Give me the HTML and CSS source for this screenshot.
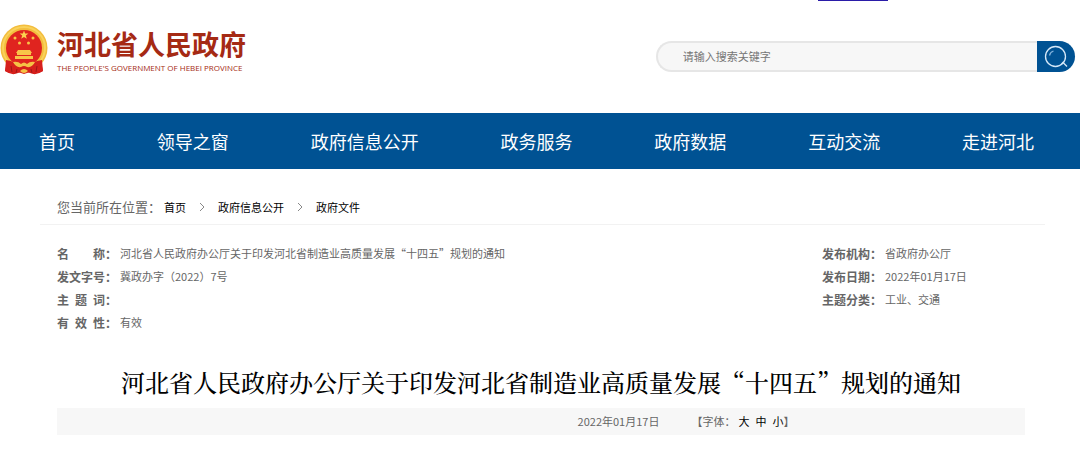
FILE: index.html
```html
<!DOCTYPE html>
<html lang="zh-CN">

<head>
    <meta charset="UTF-8">
    <meta name="viewport" content="width=device-width, initial-scale=1.0">
    <title>河北省人民政府</title>
    <link rel="stylesheet" href="styles.css">
</head>

<body>
    <header class="header">
        <span class="top-tab"></span>
        <a class="logo" href="#">
            <svg class="emblem" viewBox="0 0 48 52" aria-hidden="true">
                <path d="M8 34 L5 47 Q12 52 18 49 L24 47 L30 49 Q36 52 43 47 L40 34 Z" fill="#d6201c" />
                <circle cx="24" cy="24" r="23.5" fill="#f3bd3d" />
                <circle cx="24" cy="24" r="21" fill="none" stroke="#f9d25a" stroke-width="2" />
                <circle cx="24" cy="24" r="18" fill="#e0241f" />
                <path d="M24 6.500l1.100 3.100h3.300l-2.600 2 1 3.200-2.800-1.900-2.800 1.900 1-3.200-2.600-2h3.300z" fill="#fbd34f" />
                <g fill="#f8c548">
                    <circle cx="15" cy="14" r="1.500" />
                    <circle cx="33" cy="14" r="1.500" />
                    <circle cx="19.500" cy="19" r="1.500" />
                    <circle cx="28.500" cy="19" r="1.500" />
                    <path d="M18 26h12l2 3H16z" />
                    <path d="M17 29h14v2H17z" />
                    <path d="M15 32h18v3h-18z" />
                </g>
                <path d="M6 36 Q14 37 18 41 L24 38 L30 41 Q34 37 42 36 L43 47 Q36 51 30 48 L24 50 L18 48 Q12 51 5 47 Z" fill="#d6201c" />
                <path d="M13 38 Q18 37 21 40 Q24 37 27 40 Q30 37 35 38 Q32 44 27 43 Q24 41 21 43 Q16 44 13 38 Z" fill="#f5c245" />
                <path d="M20 47q4-4 8 0q-4 4-8 0z" fill="#f5c245" />
                <path d="M11 42l1 6M17 45l-1 4M37 42l-1 6M31 45l1 4" stroke="#9f1715" stroke-width="1" />
            </svg>
            <span class="logo-text">
                <strong>河北省人民政府</strong>
                <small>THE PEOPLE'S GOVERNMENT OF HEBEI PROVINCE</small>
            </span>
        </a>
        <form class="search">
            <input type="text" placeholder="请输入搜索关键字" aria-label="请输入搜索关键字">
            <button type="submit" aria-label="搜索">
                <svg viewBox="0 0 24 24" fill="none" stroke="#d5e8f8" stroke-width="1.300">
                    <circle cx="11.500" cy="11.500" r="10" />
                    <path d="M5.500 10.500a6 6 0 0 1 4-4.500" stroke="#7fb0da" />
                    <path d="M17.500 19l1.500-1.500 4 4" />
                </svg>
            </button>
        </form>
    </header>

    <nav class="nav">
        <a href="#">首页</a>
        <a href="#">领导之窗</a>
        <a href="#">政府信息公开</a>
        <a href="#">政务服务</a>
        <a href="#">政府数据</a>
        <a href="#">互动交流</a>
        <a href="#">走进河北</a>
    </nav>

    <main class="main">
        <div class="crumbs">
            <span class="crumbs-label">您当前所在位置：</span>
            <a href="#">首页</a>
            <svg class="arrow" viewBox="0 0 6 10"><path d="M1 1l4 4-4 4" /></svg>
            <a href="#">政府信息公开</a>
            <svg class="arrow" viewBox="0 0 6 10"><path d="M1 1l4 4-4 4" /></svg>
            <a href="#">政府文件</a>
        </div>

        <div class="info">
            <dl>
                <dt><span>名</span><span>称</span></dt>
                <dd>河北省人民政府办公厅关于印发河北省制造业高质量发展“十四五”规划的通知</dd>
                <dt><span>发</span><span>文</span><span>字</span><span>号</span></dt>
                <dd>冀政办字（2022）7号</dd>
                <dt><span>主</span><span>题</span><span>词</span></dt>
                <dd></dd>
                <dt><span>有</span><span>效</span><span>性</span></dt>
                <dd>有效</dd>
            </dl>
            <dl class="info-right">
                <dt>发布机构</dt>
                <dd>省政府办公厅</dd>
                <dt>发布日期</dt>
                <dd>2022年01月17日</dd>
                <dt>主题分类</dt>
                <dd>工业、交通</dd>
            </dl>
        </div>

        <h1>河北省人民政府办公厅关于印发河北省制造业高质量发展“十四五”规划的通知</h1>

        <div class="meta">
            <span>2022年01月17日</span>
            <div class="font-size">
                <span>【字体：</span>
                <button type="button">大</button>
                <button type="button">中</button>
                <button type="button">小</button>
                <span class="bracket">】</span>
            </div>
        </div>
    </main>
</body>

</html>
```
FILE: styles.css
```css
* {
    box-sizing: border-box;
}

body {
    margin: 0;
    background-color: white;
    color: #666;
    font-family: "Noto Sans CJK SC", sans-serif;
    font-size: 11px;
}

a {
    color: black;
    text-decoration: none;
}

.header {
    position: relative;
    display: flex;
    justify-content: space-between;
    align-items: center;
    height: 113px;
    padding: 0 5px 0 0;
}

.top-tab {
    position: absolute;
    top: 0;
    right: 192px;
    width: 70px;
    height: 1px;
    background-color: #2a1ca8;
}

.logo {
    display: flex;
    align-items: center;
    gap: 9px;
    padding-bottom: 14px;
}

.emblem {
    width: 48px;
    height: 52px;
}

.logo-text {
    display: flex;
    flex-direction: column;
    color: #a52a14;
}

.logo-text strong {
    font-size: 27px;
    line-height: 36px;
}

.logo-text small {
    font-family: "Open Sans", sans-serif;
    font-size: 8px;
    font-weight: 500;
    line-height: 12px;
}

.search {
    display: flex;
    width: 39%;
    height: 31px;
}

.search input {
    flex: 1;
    min-width: 0;
    padding: 0 25px 2px;
    border: 2px solid #e6e6e6;
    border-right: none;
    border-radius: 16px 0 0 16px;
    background-color: #f7f7f7;
    font-family: inherit;
    font-size: 11px;
}

.search input::placeholder {
    color: #757575;
}

.search button {
    display: flex;
    align-items: center;
    justify-content: center;
    width: 38px;
    padding: 0;
    border: none;
    border-radius: 0 16px 16px 0;
    background-color: #005293;
    cursor: pointer;
}

.search svg {
    width: 24px;
    height: 24px;
}

.nav {
    display: flex;
    justify-content: space-between;
    padding: 0 46px 0 39px;
    background-color: #005293;
}

.nav a {
    color: white;
    font-size: 18px;
    line-height: 56px;
}

.main {
    padding: 20px 55px 0 57px;
}

.crumbs {
    display: flex;
    align-items: center;
    height: 36px;
    margin: 0 -20px 0 -17px;
    padding: 0 17px;
    border-bottom: 1px solid #f2f2f2;
}

.crumbs-label {
    margin-right: 3px;
    font-size: 13px;
}

.arrow {
    width: 6px;
    height: 10px;
    margin: 0 13px;
    fill: none;
    stroke: #888;
}

.info {
    display: flex;
    justify-content: space-between;
    padding-top: 17px;
}

.info dl {
    display: grid;
    grid-template-columns: 48px auto;
    column-gap: 15px;
    grid-auto-rows: 23px;
    margin: 0;
    line-height: 23px;
}

.info dt {
    position: relative;
    display: flex;
    justify-content: space-between;
    font-size: 12px;
    font-weight: bold;
}

.info dt::after {
    content: "：";
    position: absolute;
    left: 100%;
}

.info dd {
    margin: 0;
}

.info .info-right {
    width: 203px;
    grid-template-columns: 48px 1fr;
}

h1 {
    margin: 30px 0 8px;
    color: black;
    font-family: "Noto Serif CJK SC", "Noto Sans CJK SC", serif;
    font-size: 24px;
    font-weight: 500;
    line-height: 36px;
    text-align: center;
}

.meta {
    display: flex;
    justify-content: center;
    gap: 32px;
    padding-left: 290px;
    background-color: #f7f7f7;
    line-height: 27px;
}

.font-size {
    display: flex;
}

.font-size button {
    padding: 0 3px;
    border: none;
    background: none;
    color: black;
    font-family: inherit;
    font-size: 11px;
    line-height: 27px;
    cursor: pointer;
}

.font-size .bracket {
    margin-left: -3px;
}
```
